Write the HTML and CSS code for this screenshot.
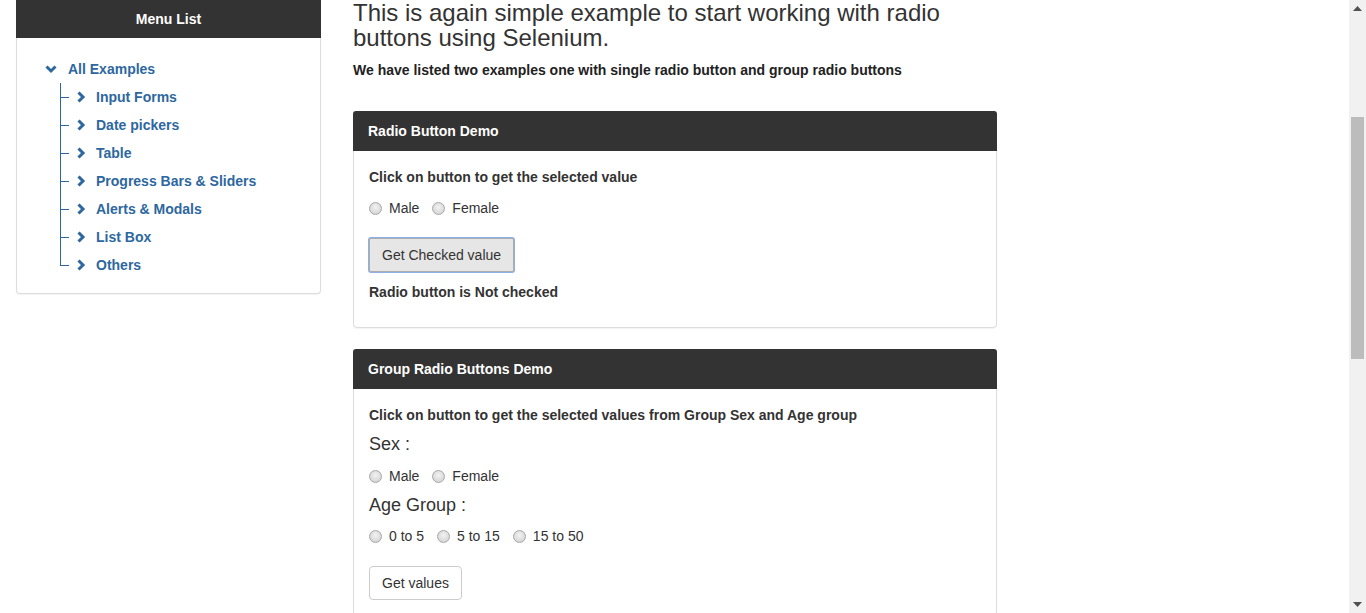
FILE: index.html
```html
<!DOCTYPE html>
<html lang="en">
<head>
<meta charset="utf-8">
<title>Radio Button Demo</title>
<link rel="stylesheet" href="styles.css">
</head>
<body>
<div class="viewport">
  <div class="page">
    <aside class="side-panel">
      <div class="side-heading">Menu List</div>
      <div class="side-body">
        <div class="tree-root">
          <svg class="chev-down" width="12" height="9" viewBox="0 0 12 9"><polyline points="1.5,1.5 6,6 10.5,1.5" fill="none" stroke="#2d67a0" stroke-width="3"/></svg>
          <span class="tree-link">All Examples</span>
        </div>
        <ul class="tree">
          <li class="tree-item"><span class="conn"></span><svg class="chev-right" width="9" height="12" viewBox="0 0 9 12"><polyline points="1.5,1.5 6,6 1.5,10.5" fill="none" stroke="#2d67a0" stroke-width="3"/></svg><span class="tree-link">Input Forms</span></li>
          <li class="tree-item"><span class="conn"></span><svg class="chev-right" width="9" height="12" viewBox="0 0 9 12"><polyline points="1.5,1.5 6,6 1.5,10.5" fill="none" stroke="#2d67a0" stroke-width="3"/></svg><span class="tree-link">Date pickers</span></li>
          <li class="tree-item"><span class="conn"></span><svg class="chev-right" width="9" height="12" viewBox="0 0 9 12"><polyline points="1.5,1.5 6,6 1.5,10.5" fill="none" stroke="#2d67a0" stroke-width="3"/></svg><span class="tree-link">Table</span></li>
          <li class="tree-item"><span class="conn"></span><svg class="chev-right" width="9" height="12" viewBox="0 0 9 12"><polyline points="1.5,1.5 6,6 1.5,10.5" fill="none" stroke="#2d67a0" stroke-width="3"/></svg><span class="tree-link">Progress Bars &amp; Sliders</span></li>
          <li class="tree-item"><span class="conn"></span><svg class="chev-right" width="9" height="12" viewBox="0 0 9 12"><polyline points="1.5,1.5 6,6 1.5,10.5" fill="none" stroke="#2d67a0" stroke-width="3"/></svg><span class="tree-link">Alerts &amp; Modals</span></li>
          <li class="tree-item"><span class="conn"></span><svg class="chev-right" width="9" height="12" viewBox="0 0 9 12"><polyline points="1.5,1.5 6,6 1.5,10.5" fill="none" stroke="#2d67a0" stroke-width="3"/></svg><span class="tree-link">List Box</span></li>
          <li class="tree-item last"><span class="conn"></span><svg class="chev-right" width="9" height="12" viewBox="0 0 9 12"><polyline points="1.5,1.5 6,6 1.5,10.5" fill="none" stroke="#2d67a0" stroke-width="3"/></svg><span class="tree-link">Others</span></li>
        </ul>
      </div>
    </aside>

    <main class="main">
      <h3 class="intro">This is again simple example to start working with radio buttons using Selenium.</h3>
      <p class="lead-text">We have listed two examples one with single radio button and group radio buttons</p>

      <section class="panel">
        <div class="panel-heading">Radio Button Demo</div>
        <div class="panel-body">
          <p class="bold-text">Click on button to get the selected value</p>
          <div class="radio-row">
            <label class="radio-label"><input type="radio" name="opt" class="radio"><span>Male</span></label>
            <label class="radio-label"><input type="radio" name="opt" class="radio"><span>Female</span></label>
          </div>
          <button class="btn btn-active" type="button">Get Checked value</button>
          <p class="bold-text result">Radio button is Not checked</p>
        </div>
      </section>

      <section class="panel">
        <div class="panel-heading">Group Radio Buttons Demo</div>
        <div class="panel-body">
          <p class="bold-text group-intro">Click on button to get the selected values from Group Sex and Age group</p>
          <h4 class="group-title">Sex :</h4>
          <div class="radio-row group-row">
            <label class="radio-label"><input type="radio" name="sex" class="radio"><span>Male</span></label>
            <label class="radio-label"><input type="radio" name="sex" class="radio"><span>Female</span></label>
          </div>
          <h4 class="group-title age-title">Age Group :</h4>
          <div class="radio-row">
            <label class="radio-label"><input type="radio" name="age" class="radio"><span>0 to 5</span></label>
            <label class="radio-label"><input type="radio" name="age" class="radio"><span>5 to 15</span></label>
            <label class="radio-label"><input type="radio" name="age" class="radio"><span>15 to 50</span></label>
          </div>
          <button class="btn btn-default" type="button">Get values</button>
        </div>
      </section>
    </main>
  </div>

  <div class="scrollbar">
    <div class="sb-arrow"><svg width="9" height="5" viewBox="0 0 9 5"><polygon points="0,5 4.5,0 9,5" fill="#505050"/></svg></div>
    <div class="sb-track"><div class="sb-thumb"></div></div>
    <div class="sb-arrow"><svg width="9" height="5" viewBox="0 0 9 5"><polygon points="0,0 9,0 4.5,5" fill="#505050"/></svg></div>
  </div>
</div>
</body>
</html>
```

FILE: styles.css
```css
* { box-sizing: border-box; }

html, body {
  margin: 0;
  padding: 0;
  height: 100%;
  overflow: hidden;
  background: #fff;
}

body {
  font-family: "Liberation Sans", Arial, Helvetica, sans-serif;
  font-size: 14px;
  line-height: 20px;
  color: #333;
}

.viewport {
  display: flex;
  height: 613px;
}

.page {
  flex: 1;
  display: flex;
  align-items: flex-start;
  padding-left: 16px;
  gap: 32px;
  overflow: hidden;
}

/* Side panel */
.side-panel {
  width: 305px;
  flex: none;
  border: 1px solid #ddd;
  border-top: none;
  border-radius: 0 0 4px 4px;
  box-shadow: 0 1px 1px rgba(0,0,0,.05);
  background: #fff;
}

.side-heading {
  height: 38px;
  line-height: 38px;
  background: #333;
  color: #fff;
  font-weight: bold;
  text-align: center;
  margin: 0 -1px;
}

.side-body {
  padding: 17px 0 14px 28px;
}

.tree-root {
  display: flex;
  align-items: center;
  height: 28px;
}

.chev-down {
  display: block;
  margin-right: 11px;
}

.tree-link {
  color: #2d67a0;
  font-weight: bold;
  white-space: nowrap;
}

.tree {
  list-style: none;
  margin: 0;
  padding: 0 0 0 15px;
}

.tree-item {
  display: flex;
  align-items: center;
  height: 28px;
}

.conn {
  width: 9px;
  height: 28px;
  flex: none;
  margin-right: 8px;
  background:
    linear-gradient(#2d67a0, #2d67a0) left top / 1px 100% no-repeat,
    linear-gradient(#2d67a0, #2d67a0) left 14px / 100% 1px no-repeat;
}

.tree-item.last .conn {
  background:
    linear-gradient(#2d67a0, #2d67a0) left top / 1px 15px no-repeat,
    linear-gradient(#2d67a0, #2d67a0) left 14px / 100% 1px no-repeat;
}

.chev-right {
  display: block;
  margin-right: 10px;
}

/* Main column */
.main {
  width: 644px;
  flex: none;
}

.intro {
  margin: 0 0 10px;
  font-size: 24px;
  line-height: 25px;
  font-weight: 500;
  color: #333;
}

.lead-text {
  margin: 0 0 31px;
  font-weight: bold;
  font-size: 14px;
  color: #222;
}

.panel {
  border: 1px solid #ddd;
  border-radius: 4px;
  box-shadow: 0 1px 1px rgba(0,0,0,.05);
  margin-bottom: 21px;
  background: #fff;
}

.panel-heading {
  background: #333;
  color: #fff;
  font-weight: bold;
  padding: 10px 15px;
  height: 40px;
  margin: -1px -1px 0;
  border-radius: 3px 3px 0 0;
}

.panel-body {
  padding: 16px 15px 15px;
}

.bold-text {
  margin: 0 0 11px;
  font-weight: bold;
}

.group-intro {
  margin-bottom: 9px;
}

.result {
  margin: 10px 0 10px;
}

.radio-row {
  display: flex;
  gap: 13px;
  height: 20px;
  align-items: center;
  margin-bottom: 20px;
}

.radio-label {
  display: inline-flex;
  align-items: center;
  color: #333;
}

.radio {
  appearance: none;
  -webkit-appearance: none;
  width: 13px;
  height: 13px;
  margin: 0 7px 0 0;
  border-radius: 50%;
  border: 1px solid #a7a7a7;
  background: radial-gradient(circle at 50% 40%, #f2f2f2 0%, #dcdcdc 60%, #cfcfcf 100%);
  flex: none;
}

.group-title {
  margin: 0 0 12px;
  font-size: 18px;
  line-height: 20px;
  font-weight: 500;
  color: #333;
}

.group-title.age-title {
  margin-bottom: 11px;
}

.radio-row.group-row {
  margin-bottom: 9px;
}

.btn {
  display: block;
  font-family: inherit;
  font-size: 14px;
  line-height: 20px;
  padding: 6px 12px;
  height: 34px;
  border-radius: 4px;
  color: #333;
  cursor: pointer;
}

.btn-default {
  background: #fff;
  border: 1px solid #ccc;
}

.btn-active {
  background: #e6e6e6;
  border: 1px solid #adadad;
  border-radius: 2px;
  box-shadow: 0 0 0 1px #8fb0e6;
}

/* Scrollbar */
.scrollbar {
  width: 17px;
  flex: none;
  background: #f1f1f1;
  display: flex;
  flex-direction: column;
}

.sb-arrow {
  height: 17px;
  display: flex;
  align-items: center;
  justify-content: center;
  flex: none;
}

.sb-track {
  flex: 1;
  padding: 100px 2px 0;
}

.sb-thumb {
  height: 242px;
  background: #bcbcbc;
}
```
